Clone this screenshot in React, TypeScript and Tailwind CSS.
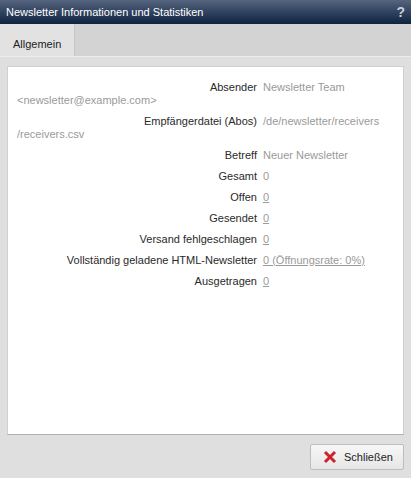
import React from "react";

const rows: { label: string; value: React.ReactNode }[] = [
  {
    label: "Absender",
    value: <span>Newsletter Team &lt;newsletter@example.com&gt;</span>,
  },
  {
    label: "Empfängerdatei (Abos)",
    value: (
      <span>
        /de/newsletter/receivers
        <wbr />
        /receivers.csv
      </span>
    ),
  },
  { label: "Betreff", value: <span>Neuer Newsletter</span> },
  { label: "Gesamt", value: <span>0</span> },
  { label: "Offen", value: <a className="underline">0</a> },
  { label: "Gesendet", value: <a className="underline">0</a> },
  { label: "Versand fehlgeschlagen", value: <a className="underline">0</a> },
  {
    label: "Vollständig geladene HTML-Newsletter",
    value: <a className="underline">0 (Öffnungsrate: 0%)</a>,
  },
  { label: "Ausgetragen", value: <a className="underline">0</a> },
];

export default function App() {
  return (
    <div className="w-[411px] h-[478px] flex flex-col bg-[#dfdfdf] font-['Liberation_Sans',Arial,sans-serif] text-[11px]">
      <div className="h-[24px] shrink-0 flex items-center justify-between px-[6px] bg-gradient-to-b from-[#56657f] to-[#0e2341] text-white">
        <span className="text-[11px] leading-none">
          Newsletter Informationen und Statistiken
        </span>
        <span className="text-[14px] font-bold text-[#c9d0dc] leading-none">?</span>
      </div>

      <div className="h-[33px] shrink-0 flex bg-[#d3d3d3] border-b border-[#ececec]">
        <div className="w-[75px] bg-[#e2e2e2] border-r border-[#c6c6c6] pl-[13px] pt-[15px] text-[#222] leading-none">
          Allgemein
        </div>
      </div>

      <div className="flex-1 px-[7px] pt-[9px] pb-[1px] min-h-0">
        <div className="h-full bg-white border border-[#cfcfcf] border-b-[#b0b0b0] pl-[9px] pr-[9px] pt-[10px]">
          {rows.map((r) => (
            <div key={r.label} className="py-[4px] leading-[13px] text-[#9a9a9a]">
              <span className="inline-block w-[240px] text-right text-[#2a2a2a] mr-[6px]">
                {r.label}
              </span>
              {r.value}
            </div>
          ))}
        </div>
      </div>

      <div className="h-[42px] shrink-0 flex items-center justify-end pr-[7px]">
        <button
          type="button"
          className="w-[94px] h-[26px] flex items-center gap-[7px] pl-[12px] border border-[#bdbdbd] rounded-[2px] bg-gradient-to-b from-[#f7f7f7] to-[#e6e6e6] text-[#222] text-[11px]"
        >
          <svg width="14" height="14" viewBox="0 0 14 14">
            <path
              d="M2 2 L12 12 M12 2 L2 12"
              stroke="#d0202a"
              strokeWidth="3"
              strokeLinecap="butt"
            />
          </svg>
          Schließen
        </button>
      </div>
    </div>
  );
}
